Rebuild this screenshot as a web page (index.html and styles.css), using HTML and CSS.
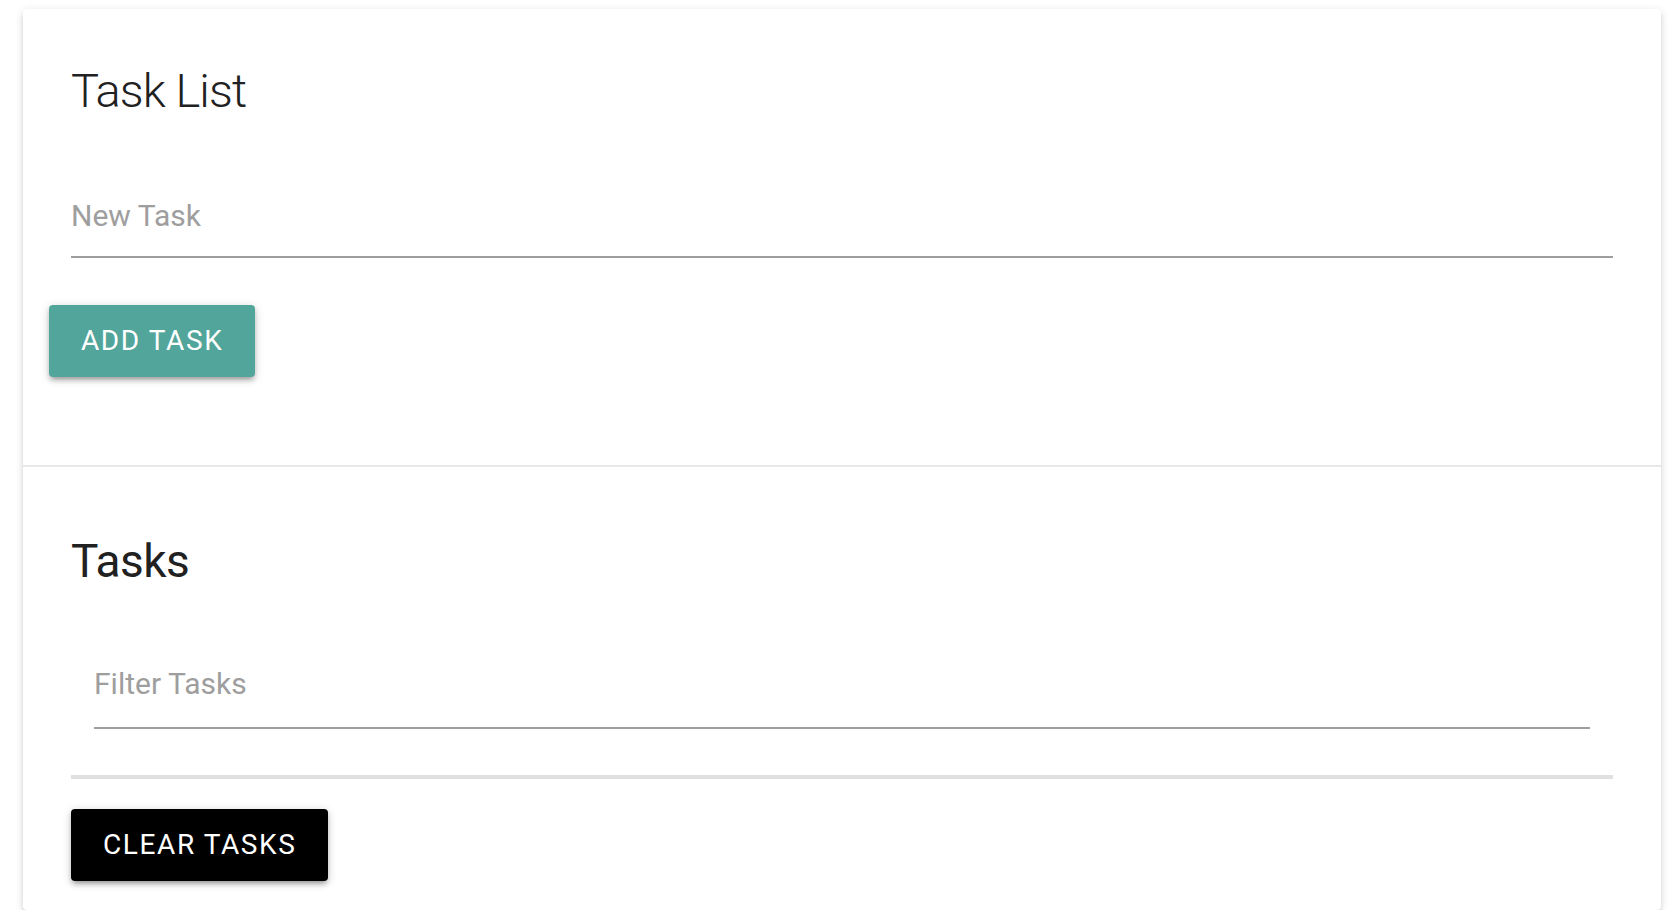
FILE: index.html
```html
<!DOCTYPE html>
<html lang="en">
<head>
<meta charset="utf-8">
<title>Task List</title>
<link rel="stylesheet" href="styles.css">
</head>
<body>
<div class="page">
  <div class="card">
    <div class="card-content">
      <h1 class="card-title">Task List</h1>
      <div class="input-field">
        <input type="text" class="text-input" placeholder="New Task">
      </div>
      <button class="btn btn-teal" type="button">Add Task</button>
    </div>
    <div class="card-action">
      <h2 class="section-title">Tasks</h2>
      <div class="input-field filter-field">
        <input type="text" class="text-input filter-input" placeholder="Filter Tasks">
      </div>
      <ul class="collection"></ul>
      <button class="btn btn-black" type="button">Clear Tasks</button>
    </div>
  </div>
</div>
</body>
</html>
```

FILE: styles.css
```css
html, body {
  margin: 0;
  padding: 0;
  background: #ffffff;
}

body {
  font-family: Roboto, "Noto Sans", "Liberation Sans", sans-serif;
  color: rgba(0, 0, 0, 0.87);
}

.page {
  padding: 9px 11px 0 23px;
}

.card {
  background: #fff;
  border-radius: 4px;
  box-shadow: 0 4px 4px 0 rgba(0, 0, 0, 0.10), 0 6px 2px -4px rgba(0, 0, 0, 0.08), 0 2px 10px 0 rgba(0, 0, 0, 0.12);
  height: 901px;
  box-sizing: border-box;
}

.card-content {
  padding: 54px 48px 0 48px;
  height: 456px;
  box-sizing: border-box;
}

.card-title {
  margin: 0;
  font-size: 47px;
  font-weight: 300;
  line-height: 56px;
  letter-spacing: -0.9px;
  color: #212121;
}

.input-field {
  margin-top: 67px;
}

.text-input {
  display: block;
  width: 100%;
  box-sizing: border-box;
  height: 72px;
  margin: 0;
  padding: 0 0 11px 0;
  border: none;
  border-bottom: 2px solid #9e9e9e;
  outline: none;
  background: transparent;
  font-family: inherit;
  font-size: 30px;
  color: #212121;
}

.text-input::placeholder {
  color: #9e9e9e;
  opacity: 1;
}

.btn {
  display: inline-block;
  height: 72px;
  padding: 0 32px;
  border: none;
  border-radius: 4px;
  font-family: inherit;
  font-size: 28px;
  font-weight: 400;
  letter-spacing: 1.6px;
  text-transform: uppercase;
  color: #fff;
  line-height: 72px;
  cursor: pointer;
  box-shadow: 0 4px 4px 0 rgba(0, 0, 0, 0.14), 0 6px 2px -4px rgba(0, 0, 0, 0.12), 0 2px 10px 0 rgba(0, 0, 0, 0.2);
}

.btn-teal {
  background: #52a59a;
  margin-top: 47px;
  margin-left: -22px;
}

.btn-black {
  background: #000;
}

.card-action {
  border-top: 2px solid #e8e8e8;
  padding: 0 48px 32px 48px;
}

.section-title {
  margin: 0;
  padding-top: 66px;
  font-size: 46px;
  font-weight: 400;
  line-height: 56px;
  letter-spacing: -0.5px;
  color: #212121;
}

.filter-field {
  margin: 65px 23px 0 23px;
}

.filter-input {
  height: 75px;
  padding-bottom: 14px;
}

.collection {
  list-style: none;
  margin: 46px 0 30px 0;
  padding: 0;
  border-top: 4px solid #e0e0e0;
}
```
